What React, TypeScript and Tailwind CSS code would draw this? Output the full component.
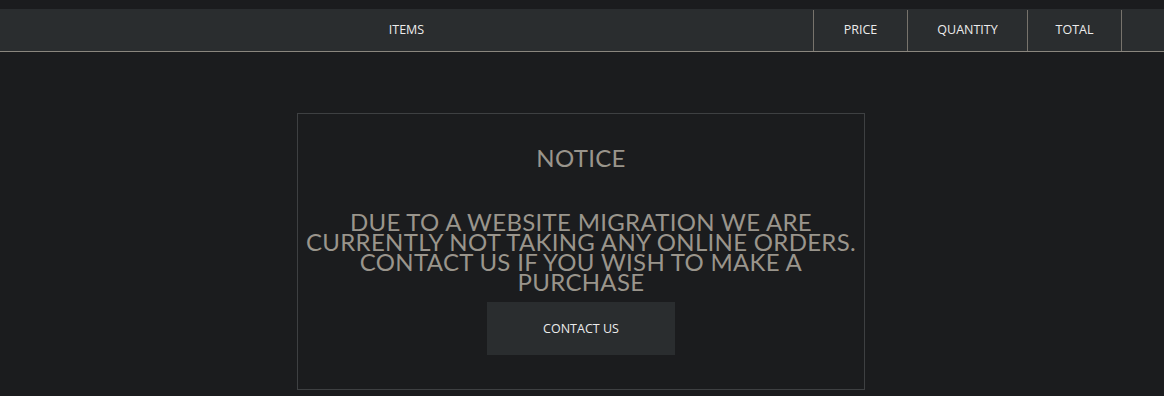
export default function App() {
  const cols = [
    { label: "PRICE", w: "w-[94px]" },
    { label: "QUANTITY", w: "w-[120px]" },
    { label: "TOTAL", w: "w-[94px]" },
  ];

  return (
    <div className="min-h-[396px] bg-[#1b1c1e] pt-[9px] font-['Open_Sans',sans-serif]">
      {/* table header */}
      <div className="flex h-[43px] border-b border-[#8a867e] bg-[#2a2d2f] pt-px text-[12.5px] font-medium text-[#ececec]">
        <div className="flex w-[813px] items-center justify-center">ITEMS</div>
        {cols.map((c) => (
          <div
            key={c.label}
            className={`flex ${c.w} items-center justify-center border-l border-[#77736c]`}
          >
            {c.label}
          </div>
        ))}
        <div className="flex-1 border-l border-[#77736c]" />
      </div>

      {/* notice */}
      <div className="ml-[297px] mt-[61px] w-[568px] border border-[#3e4042] px-[4px] pb-[34px] pt-[32px] text-center font-['Lato',sans-serif] tracking-[0.3px] text-[#9a958c]">
        <h2 className="text-[24px] leading-[24px]">NOTICE</h2>
        <p className="mt-[42px] text-[24px] leading-[20px]">
          DUE TO A WEBSITE MIGRATION WE ARE CURRENTLY NOT TAKING ANY ONLINE
          ORDERS. CONTACT US IF YOU WISH TO MAKE A PURCHASE
        </p>
        <button
          type="button"
          className="mx-auto mt-[10px] flex h-[53px] w-[188px] items-center justify-center bg-[#2a2d2f] pt-px font-['Open_Sans',sans-serif] text-[12.5px] font-medium tracking-normal text-[#ececec]"
        >
          CONTACT US
        </button>
      </div>
    </div>
  );
}
